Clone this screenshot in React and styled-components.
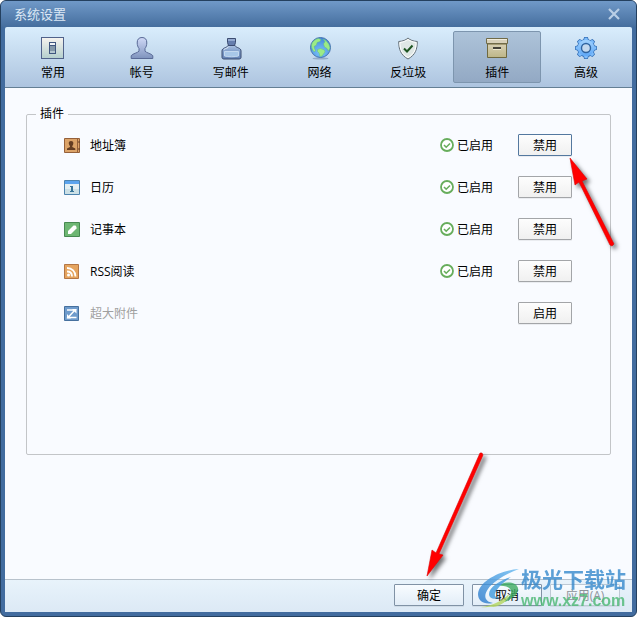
import React, { useState } from "react";
import styled, { createGlobalStyle } from "styled-components";

const GlobalStyle = createGlobalStyle`
  * {
    box-sizing: border-box;
  }

  body {
    margin: 0;
    background: #ffffff;
    color: #000000;
    font: 12px/18px "Open Sans", "Noto Sans CJK SC", sans-serif;
  }

  button {
    padding: 0;
    color: inherit;
    font: inherit;
  }

  svg {
    display: block;
  }
`;

const Window = styled.div`
  position: relative;
  display: flex;
  flex-direction: column;
  min-height: 100vh;
  padding: 0 4px 4px;
  border: 1px solid #24405f;
  border-radius: 6px;
  background: #426c9f;
  overflow: hidden;
`;

const TitleBar = styled.header`
  display: flex;
  align-items: center;
  justify-content: space-between;
  height: 26px;
  margin: 0 -4px;
  padding: 0 16px 0 13px;
  background: linear-gradient(#7099c8, #456e9e);
  color: #dce8f5;

  h1 {
    margin: 0;
    font-size: 13px;
    font-weight: 400;
  }
`;

const CloseButton = styled.button`
  border: 0;
  background: none;
`;

const Toolbar = styled.nav`
  display: flex;
  gap: 1px;
  padding: 4px 2px 4px 4px;
  border-bottom: 1px solid #647f94;
  border-radius: 2px 2px 0 0;
  background: linear-gradient(#d9edfc, #adc4df);
`;

const Tab = styled.button`
  display: flex;
  flex: 1;
  flex-direction: column;
  align-items: center;
  gap: 4px;
  height: 52px;
  padding-top: 4px;
  border: 1px solid ${(props) => (props.$active ? "#7d95ae" : "transparent")};
  border-radius: 2px;
  background: ${(props) =>
    props.$active ? "linear-gradient(#adc3d9, #93a9c4)" : "none"};
`;

const Content = styled.main`
  flex: 1;
  padding: 17px 21px 24px;
  background: #f9fbff;
`;

const Group = styled.fieldset`
  min-width: 0;
  margin: 0;
  padding: 1px 38px 120px 37px;
  border: 1px solid #c3c5c8;
  border-radius: 2px;

  legend {
    margin-left: -28px;
    padding: 0 4px;
  }
`;

const PluginList = styled.ul`
  margin: 0;
  padding: 0;
  list-style: none;
`;

const PluginRow = styled.li`
  display: grid;
  grid-template-columns: 26px 1fr 78px 54px;
  align-items: center;
  height: 42px;

  > svg {
    margin-top: 2px;
  }
`;

const PluginName = styled.span`
  padding-top: 2px;
  color: ${(props) => (props.$enabled ? "#000000" : "#a0a0a0")};
`;

const Status = styled.span`
  display: flex;
  align-items: center;
  gap: 3px;

  span {
    padding-top: 2px;
  }
`;

const PushButton = styled.button`
  width: ${(props) => (props.$wide ? "70px" : "54px")};
  height: 22px;
  padding-top: 2px;
  border: 1px solid ${(props) => (props.$focused ? "#54789f" : "#a3a5a8")};
  border-radius: 1px;
  background: linear-gradient(#fdfdfd, #f0f0f0);
  box-shadow: 0 1px 0 rgba(0, 0, 0, 0.06);
`;

const FooterButton = styled(PushButton)`
  border-color: #8092a5;
  background: linear-gradient(#f8fcff, #e2edf7);

  &:disabled {
    border-color: #bdc9d4;
    color: #8d939a;
  }
`;

const Footer = styled.footer`
  display: flex;
  justify-content: flex-end;
  gap: 8px;
  padding: 4px 12px 6px;
  border-top: 1px solid #b8c2cc;
  background: linear-gradient(#e8f3fb, #dce9f5);
`;

const ArrowLayer = styled.svg`
  position: absolute;
  right: ${(props) => props.$right}px;
  top: ${(props) => props.$top};
  bottom: ${(props) => props.$bottom};
  overflow: visible;
  pointer-events: none;
  filter: drop-shadow(3px 3px 2px rgba(0, 0, 0, 0.55));
`;

const Watermark = styled.div`
  position: absolute;
  right: 10px;
  bottom: 5px;
  display: flex;
  align-items: center;
  pointer-events: none;
  opacity: 0.8;
`;

const WatermarkText = styled.div`
  display: flex;
  flex-direction: column;
  color: #3589cc;
  font-size: 21px;
  font-weight: 700;
  line-height: 24px;

  small {
    color: #4bb873;
    font: 700 16px/20px "Liberation Sans", sans-serif;
  }
`;

const SwitchIcon = () => (
  <svg width="24" height="24" viewBox="0 0 24 24" aria-hidden="true">
    <linearGradient id="switch" x2="0" y2="1">
      <stop stopColor="#f7f3ef" />
      <stop offset="1" stopColor="#b4cfcd" />
    </linearGradient>
    <rect x=".5" y="1.5" width="22" height="21" fill="url(#switch)" stroke="#51628a" />
    <rect x="8.5" y="6.5" width="6" height="11" fill="#8498a9" stroke="#40567f" />
    <path d="M9 7h5v2H9z" fill="#f2f5f8" />
    <path d="M9 9.5h5" stroke="#40567f" />
    <path d="M9 15h5v2H9z" fill="#b5c7d0" />
  </svg>
);

const AccountIcon = () => (
  <svg width="24" height="24" viewBox="0 0 24 24" aria-hidden="true">
    <linearGradient id="account" x2="0" y2="1">
      <stop stopColor="#d0d9f7" />
      <stop offset="1" stopColor="#7e93bd" />
    </linearGradient>
    <path
      d="M9 12.500C7.800 11 7.300 9 7.200 7 7 3.300 9 1.500 12 1.500S17 3.300 16.800 7c-.1 2-.6 4-1.800 5.500v2.700c1.500 1.800 6 2.200 7.800 4.500v2.800H1.200v-2.800c1.800-2.300 6.300-2.700 7.800-4.500z"
      fill="url(#account)"
      stroke="#596a96"
    />
  </svg>
);

const InkIcon = () => (
  <svg width="24" height="24" viewBox="0 0 24 24" aria-hidden="true">
    <linearGradient id="ink" x2="0" y2="1">
      <stop stopColor="#a9c0e0" />
      <stop offset=".5" stopColor="#7d9bc8" />
      <stop offset="1" stopColor="#6381b4" />
    </linearGradient>
    <path
      d="M9 9.500c-1 2.500-6 2-6 5.500v6.500c0 1 1 1.500 2 1.500h15c1 0 2-.5 2-1.500V15c0-3.500-5-3-6-5.500z"
      fill="url(#ink)"
      stroke="#3c4c71"
    />
    <path d="M8.500 2.500h8v4l-1 3h-6l-1-3z" fill="#667eae" stroke="#3c4c71" />
    <path d="M9 3h7v2H9z" fill="#93a9d0" />
    <path d="M5.500 15.500h14v4.500c-4 1-10 1-14 0z" fill="#a8c7e8" stroke="#c3d8ef" />
    <path d="M5 13.500c1.500-1.300 4-1.300 5-3" fill="none" stroke="#e0ebf8" />
  </svg>
);

const GlobeIcon = () => (
  <svg width="24" height="24" viewBox="0 0 24 24" aria-hidden="true">
    <radialGradient id="globe" cx=".5" cy=".75" r=".8">
      <stop stopColor="#7cc4fb" />
      <stop offset="1" stopColor="#3f82d6" />
    </radialGradient>
    <ellipse cx="12.500" cy="22.500" rx="8" ry="1" fill="#94acc9" />
    <circle cx="12.500" cy="11.500" r="10" fill="url(#globe)" stroke="#4472ae" />
    <path
      d="M3.500 9c.5-3 3.500-6 7-6.500l2.500 1-1 2-3 1-.5 2.500-2.500 1.500.5 2 1 2-1 1.500c-2-1.500-3-4-3-7zM15 3l3 1.500 3 4 1 3.500-1.500 3-1.500-2.500-2.500-1.500-1-3 1.500-2.500zM9.500 13.500l3-1 4 1.500.5 2-3 4-2 .5-1-3.500-1.500-1.500z"
      fill="#9ceb86"
      stroke="#62bf82"
      strokeWidth=".5"
    />
  </svg>
);

const ShieldIcon = () => (
  <svg width="24" height="24" viewBox="0 0 24 24" aria-hidden="true">
    <path
      d="M12 2c2 2 5 3.200 9.300 3.500C21.300 13 19.500 19 12 23 4.500 19 2.700 13 2.700 5.500 7 5.200 10 4 12 2z"
      fill="#dfe7e5"
      stroke="#657079"
    />
    <path
      d="M12 3.500c2 1.500 4.700 2.600 8.100 3-.1 6.500-1.700 11.500-8.100 15.100C5.600 18 4 13 3.900 6.500c3.400-.4 6.100-1.500 8.100-3z"
      fill="none"
      stroke="#fff"
    />
    <path d="M8 12.500l3 3 5.500-6" fill="none" stroke="#1f5522" strokeWidth="2" />
  </svg>
);

const BoxIcon = () => (
  <svg width="24" height="24" viewBox="0 0 24 24" aria-hidden="true">
    <linearGradient id="box" x2="0" y2="1">
      <stop stopColor="#d8d1b7" />
      <stop offset="1" stopColor="#bdb687" />
    </linearGradient>
    <path d="M2.500 7.500h19v14h-19z" fill="url(#box)" stroke="#6f693f" />
    <path d="M3 8h18v1H3z" fill="#a49b74" />
    <path d="M1.500 2.500h21v5h-21z" fill="#d8d1ba" stroke="#706b49" />
    <path d="M2 3.500h20" stroke="#f0ecdc" />
    <path d="M8 11h8v2H8z" fill="#45433a" />
    <path d="M8 13.500h8" stroke="#eee9cf" />
  </svg>
);

const GearShape = () => (
  <>
    {[0, 45, 90, 135].map((angle) => (
      <path
        key={angle}
        d="M10.700 1.800h2.600l1 3v14.400l-1 3h-2.600l-1-3V4.800z"
        transform={`rotate(${angle} 12 12)`}
      />
    ))}
    <circle cx="12" cy="12" r="8.300" />
  </>
);

const GearIcon = () => (
  <svg width="24" height="24" viewBox="0 0 24 24" aria-hidden="true">
    <linearGradient id="gear" x1="0" y1="0" x2="0" y2="24" gradientUnits="userSpaceOnUse">
      <stop stopColor="#b4ddff" />
      <stop offset="1" stopColor="#4c9cf5" />
    </linearGradient>
    <g fill="#3670b6" stroke="#3670b6" strokeWidth="1.500">
      <GearShape />
    </g>
    <g fill="url(#gear)">
      <circle cx="12" cy="12" r="8.300" />
      {[0, 45, 90, 135].map((angle) => (
        <path
          key={angle}
          d="M10.700 1.800h2.600l1 3v14.400l-1 3h-2.600l-1-3V4.800z"
          fill="#7dbcfb"
          transform={`rotate(${angle} 12 12)`}
        />
      ))}
      <circle cx="12" cy="12" r="8" />
    </g>
    <circle cx="12" cy="12" r="4.500" fill="#c3d8ee" stroke="#2f639f" strokeWidth="1.400" />
  </svg>
);

const AddressBookIcon = () => (
  <svg width="16" height="16" viewBox="0 0 16 16" aria-hidden="true">
    <path d="M.5.5h15v14H.5z" fill="#dca368" stroke="#95603a" />
    <path d="M13.500 1v13" stroke="#95603a" />
    <path d="M14 4h2M14 11h2" stroke="#633e24" />
    <path
      d="M7 3c1.800 0 2.500 1 2.300 2.500-.1 1.200-.5 1.800-1 2.500v1l3 1.500V12H3v-1.500L6 9V8c-.6-.7-1-1.300-1.200-2.500C4.600 4 5.300 3 7 3z"
      fill="#643d22"
    />
  </svg>
);

const CalendarIcon = () => (
  <svg width="16" height="16" viewBox="0 0 16 16" aria-hidden="true">
    <path d="M.5.5h15v14H.5z" fill="#e4eff2" stroke="#4d83ae" />
    <path d="M1 1h14v3H1z" fill="#5ca4ee" />
    <path d="M1 14h14V9H1z" fill="#cce0e6" />
    <path d="M6 6h3v5h1v1H6v-1h1V7H6z" fill="#377499" />
  </svg>
);

const NotebookIcon = () => (
  <svg width="16" height="16" viewBox="0 0 16 16" aria-hidden="true">
    <path d="M.5.5h15v14H.5z" fill="#6eb773" stroke="#478951" />
    <path d="M4 9l5.500-5.500h2L12.500 5v1.500L7 12H4z" fill="#fff" />
  </svg>
);

const RssIcon = () => (
  <svg width="16" height="16" viewBox="0 0 16 16" aria-hidden="true">
    <path d="M.5.5h14v14H.5z" fill="#e5a45f" stroke="#b47645" />
    <circle cx="4.500" cy="11" r="1.500" fill="#fff" />
    <path
      d="M3 7.500c3 0 5 2 5 5M3 4c5 0 8.500 3.500 8.500 8.500"
      fill="none"
      stroke="#fff"
      strokeWidth="1.800"
    />
  </svg>
);

const AttachmentIcon = () => (
  <svg width="16" height="16" viewBox="0 0 16 16" aria-hidden="true">
    <path d="M.5.5h14v14H.5z" fill="#6e9bcc" stroke="#46709e" />
    <path d="M3 4h8L4 11.500h8.500" fill="none" stroke="#fff" strokeWidth="1.500" />
    <path d="M3 8v4.500h4zM12.500 7.500V3H8z" fill="#fff" />
  </svg>
);

const EnabledIcon = () => (
  <svg width="14" height="14" viewBox="0 0 14 14" aria-hidden="true">
    <circle cx="7" cy="7" r="6" fill="#fff" stroke="#67ad5c" strokeWidth="1.800" />
    <path d="M4 7l2.200 2.200L10 5.500" fill="none" stroke="#67ad5c" strokeWidth="1.600" />
  </svg>
);

const WatermarkLogo = () => (
  <svg width="44" height="42" viewBox="0 0 44 42" aria-hidden="true">
    <linearGradient id="swoosh" x1="0" y1="1" x2="1" y2="0">
      <stop stopColor="#2878ca" />
      <stop offset="1" stopColor="#66baf2" />
    </linearGradient>
    <path
      d="M42 1C24 2 2 13 1 26c0 7 6 11 15 9-8-1-10-7-5-14C17 13 29 6 42 1z"
      fill="url(#swoosh)"
    />
    <path
      d="M19 18c8-5 20-5 22 2 1 7-8 13-18 15 7-4 12-8 11-12-1-5-8-6-15-5z"
      fill="#3dab61"
    />
    <path d="M34 9C24 12 12 19 12 26c0 4 4 6 11 4-3 0-6-1-5-4 1-5 8-12 16-17z" fill="#3f9ade" />
    <path d="M4 39c11-1 21-6 28-13-1 7-8 12-16 13-2-1-8 1-12 0z" fill="#b4d75c" />
  </svg>
);

const tabs = [
  { label: "常用", Icon: SwitchIcon },
  { label: "帐号", Icon: AccountIcon },
  { label: "写邮件", Icon: InkIcon },
  { label: "网络", Icon: GlobeIcon },
  { label: "反垃圾", Icon: ShieldIcon },
  { label: "插件", Icon: BoxIcon },
  { label: "高级", Icon: GearIcon },
];

const initialPlugins = [
  { name: "地址簿", Icon: AddressBookIcon, enabled: true },
  { name: "日历", Icon: CalendarIcon, enabled: true },
  { name: "记事本", Icon: NotebookIcon, enabled: true },
  { name: "RSS阅读", Icon: RssIcon, enabled: true },
  { name: "超大附件", Icon: AttachmentIcon, enabled: false },
];

const App = () => {
  const [activeTab, setActiveTab] = useState("插件");
  const [plugins, setPlugins] = useState(initialPlugins);

  const toggle = (name) =>
    setPlugins(
      plugins.map((p) => (p.name === name ? { ...p, enabled: !p.enabled } : p))
    );

  return (
    <Window>
      <GlobalStyle />
      <TitleBar>
        <h1>系统设置</h1>
        <CloseButton type="button" aria-label="关闭">
          <svg width="12" height="12" viewBox="0 0 12 12" aria-hidden="true">
            <path d="M1 1l10 10M11 1L1 11" stroke="#b9cee6" strokeWidth="2.200" />
          </svg>
        </CloseButton>
      </TitleBar>
      <Toolbar>
        {tabs.map(({ label, Icon }) => (
          <Tab
            key={label}
            type="button"
            $active={label === activeTab}
            aria-pressed={label === activeTab}
            onClick={() => setActiveTab(label)}
          >
            <Icon />
            <span>{label}</span>
          </Tab>
        ))}
      </Toolbar>
      <Content>
        <Group>
          <legend>插件</legend>
          <PluginList>
            {plugins.map(({ name, Icon, enabled }, index) => (
              <PluginRow key={name}>
                <Icon />
                <PluginName $enabled={enabled}>{name}</PluginName>
                <Status>
                  {enabled && (
                    <>
                      <EnabledIcon />
                      <span>已启用</span>
                    </>
                  )}
                </Status>
                <PushButton
                  type="button"
                  $focused={index === 0}
                  onClick={() => toggle(name)}
                >
                  {enabled ? "禁用" : "启用"}
                </PushButton>
              </PluginRow>
            ))}
          </PluginList>
        </Group>
      </Content>
      <Footer>
        <FooterButton type="button" $wide>
          确定
        </FooterButton>
        <FooterButton type="button" $wide>
          取消
        </FooterButton>
        <FooterButton type="button" $wide disabled>
          应用(A)
        </FooterButton>
      </Footer>

      <ArrowLayer $right={21} $top="157px" width="45" height="89" viewBox="0 0 45 89" aria-hidden="true">
        <path d="M0 0l17 21-5 2 32 63-2 2-2-1L9 24l-4 3z" fill="#ff0000" stroke="#e00000" strokeWidth=".6" />
      </ArrowLayer>
      <ArrowLayer $right={153} $bottom="39px" width="56" height="125" viewBox="0 0 56 125" aria-hidden="true">
        <path d="M0 124l5-26 4 3L53 1l2 0 1 2-44 99 4 1z" fill="#ff0000" stroke="#e00000" strokeWidth=".6" />
      </ArrowLayer>
      <Watermark aria-hidden="true">
        <WatermarkLogo />
        <WatermarkText>
          极光下载站
          <small>www.xz7.com</small>
        </WatermarkText>
      </Watermark>
    </Window>
  );
};

export default App;
